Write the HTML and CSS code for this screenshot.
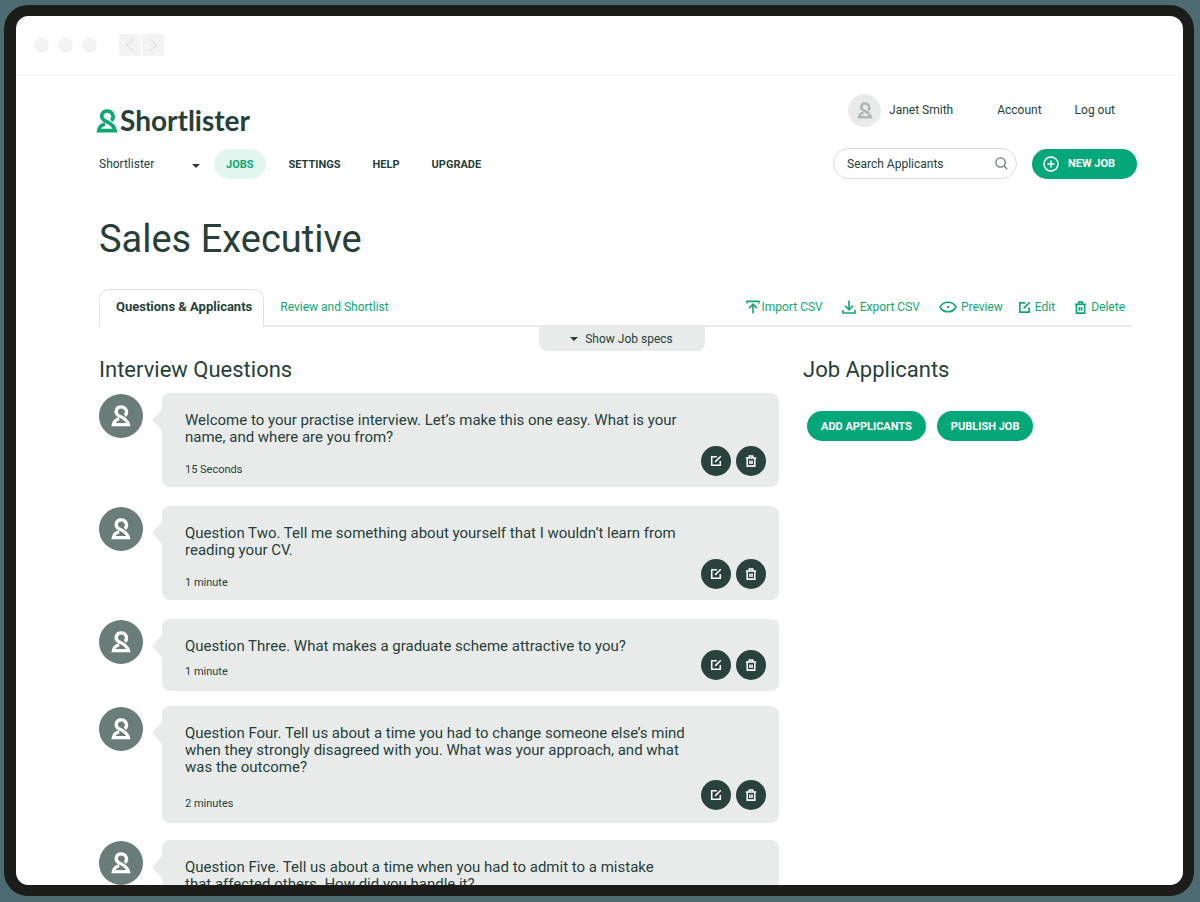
FILE: index.html
```html
<!DOCTYPE html>
<html lang="en">
<head>
    <meta charset="UTF-8">
    <meta name="viewport" content="width=device-width, initial-scale=1.0">
    <title>Shortlister - Sales Executive</title>
    <link rel="stylesheet" href="styles.css">
</head>
<body>

<!-- shared icons -->
<svg class="sprite" aria-hidden="true">
    <symbol id="icon-person" viewBox="0 0 22 24">
        <path d="M15.2 11.6C18.8 8.8 17 2 11.2 2C5.4 2 4 8.6 8 11.2C11.8 13.6 17.8 14.8 19.2 21.6H2.6C3.2 18 5 16 9 15" fill="none" stroke="currentColor" stroke-width="3.6"/>
    </symbol>
    <symbol id="icon-edit" viewBox="0 0 14 14">
        <path d="M8 2H2V12H12V7M6 8L12.6 1.4" fill="none" stroke="currentColor" stroke-width="1.8"/>
    </symbol>
    <symbol id="icon-trash" viewBox="0 0 14 14">
        <path d="M1 3.6H13M5 3.4V1.2H9V3.4M2.6 4V13H11.4V4M5.8 6.5V10.6M8.2 6.5V10.6" fill="none" stroke="currentColor" stroke-width="1.8"/>
    </symbol>
    <symbol id="icon-import" viewBox="0 0 14 14">
        <path d="M1 3.6V1.4H13V3.6M7 13.4V4.4M3 8.2L7 4.2L11 8.2" fill="none" stroke="currentColor" stroke-width="1.6"/>
    </symbol>
    <symbol id="icon-export" viewBox="0 0 14 14">
        <path d="M1 10V13H13V10M7 0.6V9.6M3 5.8L7 9.8L11 5.8" fill="none" stroke="currentColor" stroke-width="1.6"/>
    </symbol>
    <symbol id="icon-eye" viewBox="0 0 18 12">
        <path d="M1 6C4.6 -0.4 13.4 -0.4 17 6C13.4 12.4 4.6 12.4 1 6Z" fill="none" stroke="currentColor" stroke-width="1.6"/>
        <circle cx="9" cy="6" r="1.2" fill="currentColor"/>
    </symbol>
</svg>

<div class="window">
    <div class="titlebar">
        <span class="dot"></span>
        <span class="dot"></span>
        <span class="dot"></span>
        <div class="history">
            <button type="button" aria-label="Back"><svg viewBox="0 0 8 14"><path d="M7 1L1 7L7 13"/></svg></button>
            <button type="button" aria-label="Forward"><svg viewBox="0 0 8 14"><path d="M1 1L7 7L1 13"/></svg></button>
        </div>
    </div>

    <div class="page">
        <header class="header">
            <div class="header-top">
                <a class="logo" href="#">
                    <svg class="logo-mark"><use href="#icon-person"/></svg>
                    <span>Shortlister</span>
                </a>
                <div class="user-links">
                    <a class="user" href="#">
                        <span class="user-avatar"><svg><use href="#icon-person"/></svg></span>
                        Janet Smith
                    </a>
                    <a href="#">Account</a>
                    <a href="#">Log out</a>
                </div>
            </div>

            <div class="header-bottom">
                <select class="company" aria-label="Company">
                    <option>Shortlister</option>
                </select>
                <nav class="nav">
                    <a class="active" href="#">JOBS</a>
                    <a href="#">SETTINGS</a>
                    <a href="#">HELP</a>
                    <a href="#">UPGRADE</a>
                </nav>
                <form class="search">
                    <input type="text" aria-label="Search Applicants" placeholder="Search Applicants">
                    <svg viewBox="0 0 14 14"><circle cx="6" cy="6" r="5"/><path d="M9.6 9.6L13 13"/></svg>
                </form>
                <button type="button" class="btn btn-new">
                    <svg viewBox="0 0 16 16"><circle cx="8" cy="8" r="7"/><path d="M8 4.4V11.6M4.4 8H11.6"/></svg>
                    NEW JOB
                </button>
            </div>
        </header>

        <main class="main">
            <h1>Sales Executive</h1>

            <div class="tabs">
                <a class="tab active" href="#">Questions &amp; Applicants</a>
                <a class="tab" href="#">Review and Shortlist</a>
                <div class="tools">
                    <a class="tool-import" href="#"><svg><use href="#icon-import"/></svg>Import CSV</a>
                    <a href="#"><svg><use href="#icon-export"/></svg>Export CSV</a>
                    <a class="tool-preview" href="#"><svg><use href="#icon-eye"/></svg>Preview</a>
                    <a class="tool-edit" href="#"><svg><use href="#icon-edit"/></svg>Edit</a>
                    <a class="tool-delete" href="#"><svg><use href="#icon-trash"/></svg>Delete</a>
                </div>
            </div>
            <button type="button" class="specs">Show Job specs</button>

            <div class="columns">
                <section class="questions">
                    <h2>Interview Questions</h2>

                    <div class="question">
                        <span class="avatar"><svg><use href="#icon-person"/></svg></span>
                        <div class="bubble">
                            <div class="bubble-text">
                                <p>Welcome to your practise interview. Let’s make this one easy. What is your<br>name, and where are you from?</p>
                                <small>15 Seconds</small>
                            </div>
                            <div class="actions">
                                <button type="button" aria-label="Edit"><svg><use href="#icon-edit"/></svg></button>
                                <button type="button" aria-label="Delete"><svg><use href="#icon-trash"/></svg></button>
                            </div>
                        </div>
                    </div>

                    <div class="question">
                        <span class="avatar"><svg><use href="#icon-person"/></svg></span>
                        <div class="bubble">
                            <div class="bubble-text">
                                <p>Question Two. Tell me something about yourself that I wouldn’t learn from<br>reading your CV.</p>
                                <small>1 minute</small>
                            </div>
                            <div class="actions">
                                <button type="button" aria-label="Edit"><svg><use href="#icon-edit"/></svg></button>
                                <button type="button" aria-label="Delete"><svg><use href="#icon-trash"/></svg></button>
                            </div>
                        </div>
                    </div>

                    <div class="question short">
                        <span class="avatar"><svg><use href="#icon-person"/></svg></span>
                        <div class="bubble">
                            <div class="bubble-text">
                                <p>Question Three. What makes a graduate scheme attractive to you?</p>
                                <small>1 minute</small>
                            </div>
                            <div class="actions">
                                <button type="button" aria-label="Edit"><svg><use href="#icon-edit"/></svg></button>
                                <button type="button" aria-label="Delete"><svg><use href="#icon-trash"/></svg></button>
                            </div>
                        </div>
                    </div>

                    <div class="question long">
                        <span class="avatar"><svg><use href="#icon-person"/></svg></span>
                        <div class="bubble">
                            <div class="bubble-text">
                                <p>Question Four. Tell us about a time you had to change someone else’s mind<br>when they strongly disagreed with you. What was your approach, and what<br>was the outcome?</p>
                                <small>2 minutes</small>
                            </div>
                            <div class="actions">
                                <button type="button" aria-label="Edit"><svg><use href="#icon-edit"/></svg></button>
                                <button type="button" aria-label="Delete"><svg><use href="#icon-trash"/></svg></button>
                            </div>
                        </div>
                    </div>

                    <div class="question">
                        <span class="avatar"><svg><use href="#icon-person"/></svg></span>
                        <div class="bubble">
                            <div class="bubble-text">
                                <p>Question Five. Tell us about a time when you had to admit to a mistake<br>that affected others. How did you handle it?</p>
                            </div>
                        </div>
                    </div>
                </section>

                <section class="applicants">
                    <h2>Job Applicants</h2>
                    <div class="applicant-buttons">
                        <button type="button" class="btn">ADD APPLICANTS</button>
                        <button type="button" class="btn">PUBLISH JOB</button>
                    </div>
                </section>
            </div>
        </main>
    </div>
</div>

</body>
</html>
```
FILE: styles.css
```css
* {
    box-sizing: border-box;
}

body {
    margin: 0;
    padding: 5px 6px 6px 4px;
    height: 100vh;
    background-color: #4f6b72;
    font-family: Roboto, 'Liberation Sans', sans-serif;
    font-size: 12px;
    line-height: 17px;
    color: #263f39;
    overflow: hidden;
}

a {
    color: inherit;
    text-decoration: none;
}

button {
    font-family: inherit;
    border: none;
    padding: 0;
    cursor: pointer;
}

h1, h2, p {
    margin: 0;
    font-weight: 400;
}

.sprite {
    display: none;
}

.window {
    height: 100%;
    border: 11px solid #1c1d1b;
    border-left-width: 12px;
    border-radius: 24px;
    background-color: #fff;
    overflow: hidden;
}

.titlebar {
    display: flex;
    align-items: center;
    gap: 9px;
    height: 60px;
    padding: 0 18px;
    border-bottom: 2px solid #f9f9f9;
}

.dot {
    width: 15px;
    height: 15px;
    border-radius: 50%;
    background-color: #f3f3f3;
}

.history {
    display: flex;
    gap: 1px;
    margin-left: 13px;
}

.history button {
    display: flex;
    align-items: center;
    justify-content: center;
    width: 22px;
    height: 22px;
    border-radius: 2px;
    background-color: #f3f3f3;
}

.history svg {
    width: 8px;
    height: 14px;
    fill: none;
    stroke: #d4d4d4;
}

.page {
    padding: 17px 46px 0 80px;
}

.header-top {
    display: flex;
    justify-content: space-between;
    height: 55px;
}

.logo {
    display: flex;
    align-items: center;
    gap: 2px;
    font-family: Lato, sans-serif;
    font-size: 28px;
    font-weight: 700;
}

.logo-mark {
    width: 22px;
    height: 24px;
    color: #0fa873;
}

.user-links {
    display: flex;
    align-items: center;
    gap: 33px;
    height: 34px;
    margin-right: 22px;
}

.user {
    display: flex;
    align-items: center;
    gap: 8px;
    margin-right: 11px;
}

.user-avatar {
    display: flex;
    align-items: center;
    justify-content: center;
    width: 33px;
    height: 33px;
    border-radius: 50%;
    background-color: #e8ebea;
    color: #b0b8b5;
}

.user-avatar svg {
    width: 16px;
    height: 17px;
}

.header-bottom {
    display: flex;
    align-items: center;
}

.company {
    width: 101px;
    height: 30px;
    margin-left: 3px;
    padding: 2px 0 0;
    border: none;
    appearance: none;
    font: inherit;
    color: inherit;
    background: url("data:image/svg+xml,%3Csvg xmlns='http://www.w3.org/2000/svg' viewBox='0 0 8 4'%3E%3Cpath d='M0 0H8L4 4Z' fill='%23263f39'/%3E%3C/svg%3E") no-repeat right 15px / 8px 4px;
}

.nav {
    display: flex;
    gap: 32px;
    margin-left: 14px;
    font-size: 11px;
    font-weight: 700;
}

.nav a {
    height: 30px;
    line-height: 32px;
}

.nav .active {
    padding: 0 12px;
    margin-right: -9px;
    border-radius: 15px;
    background-color: #e3f5ef;
    color: #0fa873;
}

.search {
    display: flex;
    align-items: center;
    width: 184px;
    height: 31px;
    margin-left: auto;
    padding: 0 8px 0 13px;
    border: 1px solid #d9dddc;
    border-radius: 16px;
}

.search input {
    flex: 1;
    min-width: 0;
    padding: 2px 0 0;
    border: none;
    outline: none;
    font: inherit;
}

.search input::placeholder {
    color: #263f39;
}

.search svg {
    width: 13px;
    height: 13px;
    fill: none;
    stroke: #65736f;
    stroke-width: 1.4;
}

.btn {
    height: 30px;
    padding: 0 14px;
    border-radius: 15px;
    background-color: #04a878;
    color: #fff;
    font-size: 11px;
    font-weight: 700;
}

.btn-new {
    display: flex;
    align-items: center;
    gap: 9px;
    width: 105px;
    margin-left: 15px;
    padding: 0 11px;
    white-space: nowrap;
}

.btn-new svg {
    width: 16px;
    height: 16px;
    fill: none;
    stroke: #fff;
    stroke-width: 1.6;
}

.main {
    padding: 36px 5px 0 3px;
}

h1 {
    font-size: 38px;
    line-height: 48px;
}

.tabs {
    display: flex;
    align-items: flex-end;
    height: 38px;
    margin-top: 26px;
    border-bottom: 2px solid #e9ebeb;
}

.tab {
    height: 36px;
    padding: 0 16px;
    line-height: 36px;
    color: #0fa873;
}

.tab.active {
    height: 38px;
    margin-bottom: -2px;
    padding: 0 11px 0 16px;
    border: 1px solid #dfe2e1;
    border-bottom: none;
    border-radius: 10px 10px 0 0;
    background-color: #fff;
    color: #263f39;
    font-size: 13px;
    font-weight: 700;
    line-height: 34px;
}

.tools {
    display: flex;
    gap: 19px;
    margin-left: auto;
    margin-right: 7px;
    line-height: 36px;
    color: #0fa873;
}

.tools a {
    display: flex;
    align-items: center;
    gap: 4px;
}

.tools svg {
    width: 14px;
    height: 14px;
}

.tools .tool-import {
    gap: 2px;
}

.tools .tool-preview svg {
    width: 18px;
    height: 12px;
}

.tools .tool-edit {
    margin-left: -4px;
}

.tools .tool-edit svg,
.tools .tool-delete svg {
    width: 13px;
    height: 13px;
}

.specs {
    display: block;
    width: 166px;
    height: 24px;
    margin: 0 0 0 calc(50% - 77px);
    padding-bottom: 1px;
    border-radius: 0 0 8px 8px;
    background-color: #e9ebeb;
    color: #263f39;
    font-size: 12px;
}

.specs::before {
    content: "";
    display: inline-block;
    margin-right: 7px;
    border: 4px solid transparent;
    border-top-color: #263f39;
    border-bottom: none;
    vertical-align: middle;
}

.columns {
    display: grid;
    grid-template-columns: 680px 1fr;
    gap: 24px;
}

h2 {
    padding-top: 4px;
    font-size: 22px;
    line-height: 30px;
}

.questions h2 {
    margin-bottom: 8px;
}

.question {
    display: flex;
    align-items: flex-start;
    gap: 19px;
    margin-bottom: 19px;
}

.avatar {
    display: flex;
    flex: none;
    align-items: center;
    justify-content: center;
    width: 44px;
    height: 44px;
    margin-top: 1px;
    border-radius: 50%;
    background-color: #6b7d78;
    color: #fff;
}

.avatar svg {
    width: 20px;
    height: 22px;
}

.bubble {
    position: relative;
    display: flex;
    flex: 1;
    justify-content: space-between;
    padding: 19px 13px 9px 23px;
    border-radius: 8px;
    background-color: #e9ebeb;
}

/* little arrow that points to the avatar */
.bubble::before {
    content: "";
    position: absolute;
    top: 16px;
    left: -10px;
    border: 11px solid transparent;
    border-left: none;
    border-right: 10px solid #e9ebeb;
}

.bubble p {
    font-size: 15px;
    white-space: nowrap;
}

.bubble small {
    display: block;
    margin-top: 15px;
    font-size: 11px;
}

.short {
    margin-bottom: 15px;
}

.short small {
    margin-top: 8px;
    margin-bottom: 2px;
}

.long {
    margin-bottom: 17px;
}

.long small {
    margin-top: 19px;
    margin-bottom: 2px;
}

.actions {
    display: flex;
    align-items: flex-end;
    gap: 5px;
    padding-bottom: 2px;
}

.long .actions {
    padding-bottom: 4px;
}

.actions button {
    display: flex;
    align-items: center;
    justify-content: center;
    width: 30px;
    height: 30px;
    border-radius: 50%;
    background-color: #2a423c;
    color: #fff;
}

.actions svg {
    width: 12px;
    height: 12px;
}

.applicant-buttons {
    display: flex;
    gap: 11px;
    margin: 26px 0 0 4px;
}
```
